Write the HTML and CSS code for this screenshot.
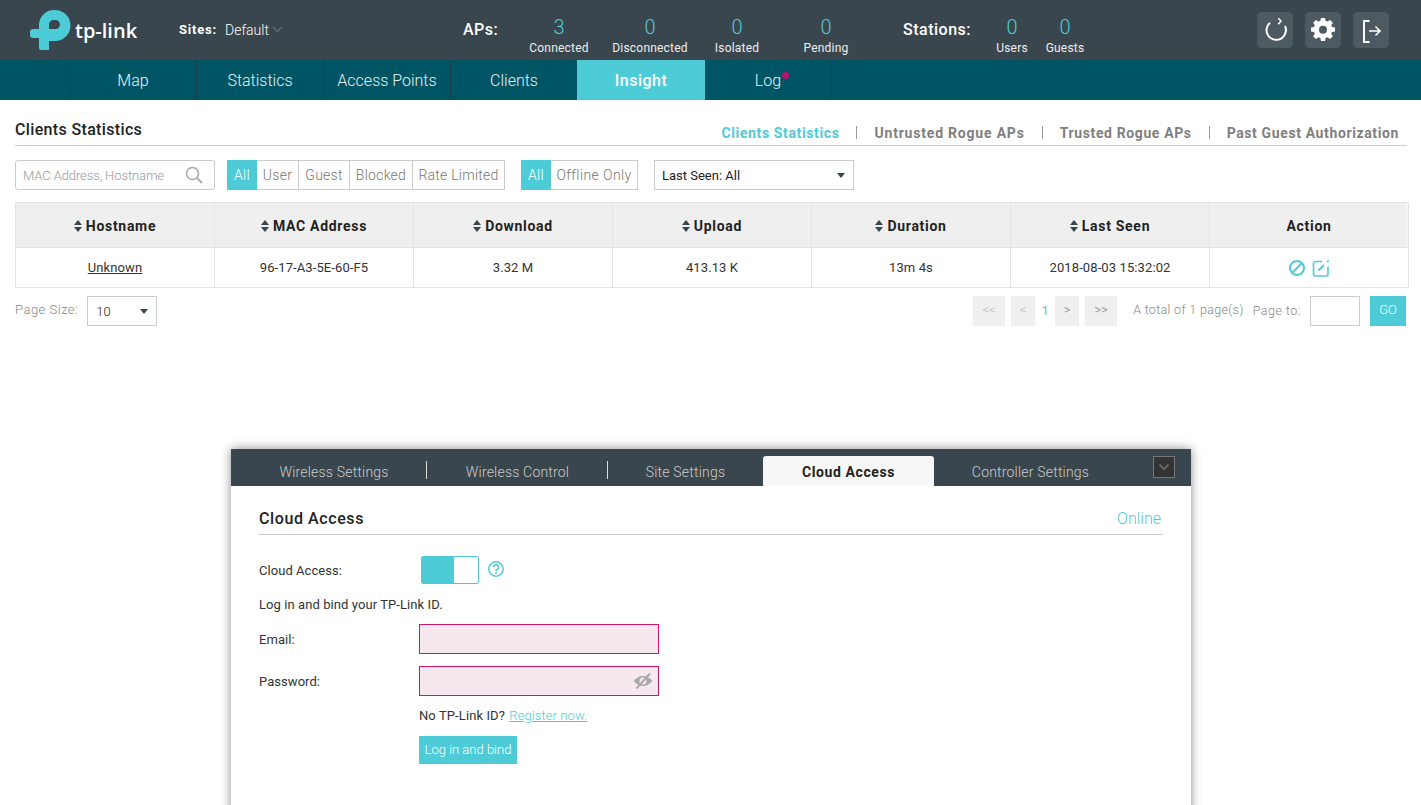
FILE: index.html
```html
<!DOCTYPE html>
<html lang="en">
<head>
<meta charset="utf-8">
<title>Clients Statistics</title>
<link rel="stylesheet" href="styles.css">
</head>
<body>
<header class="topbar">
  <div class="logo">
    <svg class="logo-mark" width="42" height="42" viewBox="0 0 42 42"><path fill-rule="evenodd" d="M1 23a3 3 0 0 1 3-3H10V16A15 15 0 0 1 25 1H26A15.500 15.500 0 0 1 26 32H20V41H12A2 2 0 0 1 10 39V29H4A3 3 0 0 1 1 26ZM20 20H26.500A4.500 4.500 0 0 0 26.500 11H24.500A4.500 4.500 0 0 0 20 15.500Z" fill="#4dcbd7"/></svg>
    <span class="logo-text">tp-link</span>
  </div>
  <div class="sites"><b>Sites:</b><span>Default</span><svg width="11" height="7" viewBox="0 0 11 7"><path d="M1 1l4.500 4.500L10 1" fill="none" stroke="#5f6b72" stroke-width="1.500"/></svg></div>
  <div class="stat-group aps">
    <b class="stat-label">APs:</b>
    <div class="stat s-conn"><span class="num">3</span><span class="cap">Connected</span></div>
    <div class="stat s-disc"><span class="num">0</span><span class="cap">Disconnected</span></div>
    <div class="stat s-iso"><span class="num">0</span><span class="cap">Isolated</span></div>
    <div class="stat s-pend"><span class="num">0</span><span class="cap">Pending</span></div>
  </div>
  <div class="stat-group stations">
    <b class="stat-label">Stations:</b>
    <div class="stat s-user"><span class="num">0</span><span class="cap">Users</span></div>
    <div class="stat s-guest"><span class="num">0</span><span class="cap">Guests</span></div>
  </div>
  <div class="tools">
    <div class="tool"><svg width="24" height="26" viewBox="0 0 24 26"><path d="M7 5.700A9.700 9.700 0 1 0 22 9" fill="none" stroke="#fff" stroke-width="2"/><path d="M15.300 1.300L18 4L15.300 7.300" fill="none" stroke="#fff" stroke-width="1.500"/></svg></div>
    <div class="tool"><svg width="24" height="24" viewBox="0 0 24 24"><path d="M10 1.500h4l.6 3 1.900.8 2.600-1.700 2.800 2.800-1.700 2.600.8 1.900 3 .6v4l-3 .6-.8 1.900 1.700 2.600-2.800 2.800-2.600-1.700-1.900.8-.6 3h-4l-.6-3-1.900-.8-2.600 1.700-2.800-2.800 1.700-2.600-.8-1.900-3-.6v-4l3-.6.800-1.900-1.700-2.600 2.800-2.800 2.600 1.700 1.900-.8Z" transform="translate(0 -1.500) scale(1 .96)" fill="#fff"/><circle cx="12" cy="11.800" r="4" fill="#4e5a61"/></svg></div>
    <div class="tool"><svg width="24" height="26" viewBox="0 0 24 26"><path d="M10.500 4H5V25H10.500" fill="none" stroke="#fff" stroke-width="2"/><path d="M10 14H21M16.500 9.500L21 14L16.500 18.500" fill="none" stroke="#fff" stroke-width="1.600"/></svg></div>
  </div>
</header>
<nav class="mainnav">
  <a class="nav-item">Map</a>
  <a class="nav-item">Statistics</a>
  <a class="nav-item">Access Points</a>
  <a class="nav-item">Clients</a>
  <a class="nav-item active">Insight</a>
  <a class="nav-item"><span class="log">Log<i class="dot"></i></span></a>
</nav>
<main class="content">
  <div class="title-row">
    <h1>Clients Statistics</h1>
    <div class="subtabs">
      <a class="subtab on">Clients Statistics</a>
      <a class="subtab wide">Untrusted Rogue APs</a>
      <a class="subtab">Trusted Rogue APs</a>
      <a class="subtab">Past Guest Authorization</a>
    </div>
  </div>
  <div class="filters">
    <div class="search"><span>MAC Address, Hostname</span><svg width="18" height="18" viewBox="0 0 18 18"><circle cx="7.500" cy="7.500" r="6" fill="none" stroke="#aaa" stroke-width="1.600"/><path d="M12 12l5 5" stroke="#aaa" stroke-width="2"/></svg></div>
    <div class="seg seg-a"><span class="on">All</span><span>User</span><span>Guest</span><span>Blocked</span><span>Rate Limited</span></div>
    <div class="seg seg-b"><span class="on">All</span><span>Offline Only</span></div>
    <div class="select seen"><span>Last Seen: All</span><i class="caret"></i></div>
  </div>
  <table class="grid">
    <thead>
      <tr>
        <th><i class="sort"></i>Hostname</th>
        <th><i class="sort"></i>MAC Address</th>
        <th><i class="sort"></i>Download</th>
        <th><i class="sort"></i>Upload</th>
        <th><i class="sort"></i>Duration</th>
        <th><i class="sort"></i>Last Seen</th>
        <th>Action</th>
      </tr>
    </thead>
    <tbody>
      <tr>
        <td><u>Unknown</u></td>
        <td>96-17-A3-5E-60-F5</td>
        <td>3.32 M</td>
        <td>413.13 K</td>
        <td>13m 4s</td>
        <td>2018-08-03 15:32:02</td>
        <td class="actions">
          <svg width="18" height="18" viewBox="0 0 18 18"><circle cx="9" cy="9" r="7" fill="none" stroke="#4dcbd7" stroke-width="2"/><path d="M4.500 13.500l9-9" stroke="#4dcbd7" stroke-width="2"/></svg>
          <svg width="18" height="18" viewBox="0 0 18 18"><path d="M10 2.500H3.500a2 2 0 0 0-2 2V15a2 2 0 0 0 2 2H14a2 2 0 0 0 2-2V7.500" fill="none" stroke="#4dcbd7" stroke-width="1.600"/><path d="M6.500 11.500L12 6" stroke="#4dcbd7" stroke-width="2"/><path d="M15 3l1.800-1.800" stroke="#4dcbd7" stroke-width="1.600"/></svg>
        </td>
      </tr>
    </tbody>
  </table>
  <div class="pager-row">
    <span class="muted ps-label">Page Size:</span>
    <div class="select size"><span>10</span><i class="caret"></i></div>
    <div class="pager">
      <span class="pg dim w32">&lt;&lt;</span>
      <span class="pg dim w24">&lt;</span>
      <span class="pg-cur">1</span>
      <span class="pg w24">&gt;</span>
      <span class="pg w32">&gt;&gt;</span>
      <span class="muted total">A total of 1 page(s)</span>
      <span class="muted pto">Page to:</span>
      <span class="pg-input"></span>
      <span class="go">GO</span>
    </div>
  </div>
</main>
<section class="panel">
  <div class="panel-tabs">
    <a class="ptab p1">Wireless Settings</a>
    <a class="ptab p2">Wireless Control</a>
    <a class="ptab p3">Site Settings</a>
    <a class="ptab p4 on">Cloud Access</a>
    <a class="ptab p5">Controller Settings</a>
    <span class="collapse"><svg width="12" height="8" viewBox="0 0 12 8"><path d="M1.500 1.500L6 6l4.500-4.500" fill="none" stroke="#666" stroke-width="2"/></svg></span>
  </div>
  <div class="panel-body">
    <div class="panel-title"><h2>Cloud Access</h2><span class="online">Online</span></div>
    <div class="row r-toggle">
      <label>Cloud Access:</label>
      <div class="toggle"><i class="t-on"></i></div>
      <svg class="help" width="18" height="18" viewBox="0 0 18 18"><circle cx="9" cy="9" r="7.200" fill="none" stroke="#4dcbd7" stroke-width="1.500"/><path d="M6.500 7.200A2.500 2.500 0 1 1 10 9.500c-.8.400-1 .8-1 1.800" fill="none" stroke="#4dcbd7" stroke-width="1.500"/><circle cx="9" cy="13.200" r="1" fill="#4dcbd7"/></svg>
    </div>
    <p class="bind">Log in and bind your TP-Link ID.</p>
    <div class="row r-field"><label>Email:</label><div class="field"></div></div>
    <div class="row r-field r-pass"><label>Password:</label><div class="field"><svg width="20" height="16" viewBox="0 0 20 16"><path d="M.5 8C3.500 4.500 6.500 3 10 3s6.500 1.500 9.500 5c-3 3.500-6 5-9.500 5S3.500 11.500.5 8Z" fill="#aaa"/><circle cx="10" cy="8" r="3.500" fill="#f7e8ef"/><path d="M3.500 15.500L17 .5" stroke="#aaa" stroke-width="2"/></svg></div></div>
    <p class="reg">No TP-Link ID? <a>Register now.</a></p>
    <span class="bind-btn">Log in and bind</span>
  </div>
</section>
</body>
</html>
```
FILE: styles.css
```css
* { box-sizing: border-box; }
html, body { margin: 0; height: 805px; overflow: hidden; }
body { font-family: Roboto, "Liberation Sans", sans-serif; font-size: 13px; color: #222; background: #fff; position: relative; }
h1, h2, p { margin: 0; }

.topbar { height: 60px; background: #3a464d; display: flex; color: #fff; }
.logo { width: 179px; padding: 9px 0 0 29px; display: flex; flex: none; }
.logo-mark { flex: none; }
.logo-text { font-family: "Open Sans", sans-serif; font-size: 20px; font-weight: 600; margin: 7px 0 0 4px; line-height: 30px; height: 30px; }
.sites { width: 284px; flex: none; display: flex; align-items: center; height: 60px; padding-bottom: 1px; font-size: 14px; }
.sites b { letter-spacing: .8px; margin-right: 8px; font-size: 13px; font-weight: 700; }
.sites span { margin-right: 3px; font-weight: 300; }
.stat-group { display: flex; flex: none; }
.stat-label { font-size: 16px; font-weight: 500; line-height: 60px; letter-spacing: .5px; }
.stat { display: flex; flex-direction: column; align-items: center; flex: none; }
.num { color: #4dcbd7; font-size: 20px; font-weight: 300; line-height: 24px; margin-top: 15px; }
.cap { font-size: 12px; font-weight: 400; line-height: 14px; margin-top: 2px; color: #eee; letter-spacing: .2px; white-space: nowrap; }
.aps { width: 440px; }
.aps .stat-label { width: 46px; }
.s-conn { width: 80px; margin-left: 10px; }
.s-disc { width: 90px; margin-left: 6px; }
.s-iso { width: 88px; margin-left: -2px; }
.s-pend { width: 90px; }
.stations { width: 354px; }
.stations .stat-label { width: 90px; }
.s-user { width: 34px; margin-left: 2px; }
.s-guest { width: 44px; margin-left: 14px; }
.tools { display: flex; gap: 12px; padding-top: 12px; }
.tool { width: 36px; height: 36px; background: #4e5a61; border-radius: 5px; display: flex; align-items: center; justify-content: center; }

.mainnav { height: 40px; background: #005565; display: flex; padding-left: 69px; }
.nav-item { width: 127px; border-left: 1px solid #17404c; color: #e8f2f3; font-size: 16px; font-weight: 300; display: flex; align-items: center; justify-content: center; }
.nav-item:last-child { border-right: 1px solid #17404c; }
.nav-item.active { background: #4dcbd7; color: #fff; font-weight: 500; border-left: 0; width: 128px; letter-spacing: .5px; }
.active + .nav-item { border-left: 0; width: 127px; }
.log { position: relative; }
.dot { position: absolute; left: 27px; top: 1px; width: 7px; height: 7px; border-radius: 50%; background: #b5166b; }

.content { padding: 0 12px 0 15px; }
.title-row { height: 46px; margin-right: 2px; border-bottom: 1px solid #ccc; display: flex; justify-content: space-between; }
h1 { font-size: 16px; font-weight: 500; line-height: 20px; padding-top: 20px; color: #222; letter-spacing: .35px; }
.subtabs { display: flex; padding-top: 26px; padding-right: 8px; height: 46px; }
.subtab { font-size: 14px; font-weight: 700; color: #7f7f7f; letter-spacing: .62px; padding: 0 17px; border-right: 1px solid #999; height: 13px; line-height: 15px; white-space: nowrap; }
.subtab.wide { letter-spacing: .8px; }
.subtab:last-child { border: 0; padding-right: 0; }
.subtab.on { color: #4dcbd7; }

.filters { display: flex; margin-top: 14px; height: 30px; }
.search { width: 200px; height: 30px; border: 1px solid #ccc; border-radius: 3px; display: flex; justify-content: space-between; align-items: center; padding: 0 11px 0 7px; color: #999; font-size: 13px; font-weight: 300; margin-right: 12px; letter-spacing: -.1px; white-space: nowrap; }
.seg { display: flex; border: 1px solid #ccc; border-left: 0; font-size: 14px; font-weight: 300; color: #777; height: 30px; letter-spacing: .25px; white-space: nowrap; }
.seg span { text-align: center; line-height: 28px; border-left: 1px solid #ccc; }
.seg .on { background: #4dcbd7; color: #fff; border: 0; margin: -1px 0; line-height: 30px; width: 30px; }
.seg-a span:nth-child(2) { width: 41px; border-left: 0; }
.seg-a span:nth-child(3) { width: 51px; }
.seg-a span:nth-child(4) { width: 63px; }
.seg-a span:nth-child(5) { width: 92px; }
.seg-a { margin-right: 16px; width: 278px; }
.seg-b { margin-right: 16px; width: 117px; letter-spacing: .4px; }
.seg-b span:last-child { border-left: 0; flex: 1; }
.select { border: 1px solid #ccc; height: 30px; display: flex; align-items: center; justify-content: space-between; background: #fff; color: #222; font-size: 13px; font-weight: 400; }
.seen { width: 200px; padding: 0 8px 0 7px; }
.caret { width: 0; height: 0; border: 4.500px solid transparent; border-top: 5px solid #37474f; border-bottom: 0; }

.grid { width: 1394px; table-layout: fixed; border-collapse: collapse; margin-top: 12px; }
.grid th, .grid td { border: 1px solid #e4e4e4; text-align: center; }
.grid th { background: #efefef; height: 45px; padding-top: 2px; font-size: 14px; font-weight: 700; color: #222; letter-spacing: .7px; }
.grid th:last-child { background: linear-gradient(90deg, #efefef 196px, #f6f6f6 196px); }
.grid td { height: 40px; font-size: 13px; font-weight: 400; color: #333; letter-spacing: .1px; }
.sort { display: inline-block; width: 8px; height: 12px; margin-right: 4px; vertical-align: -1px; position: relative; }
.sort::before, .sort::after { content: ""; position: absolute; left: 0; border: 4px solid transparent; }
.sort::before { border-bottom: 5px solid #37474f; border-top: 0; top: 0; }
.sort::after { bottom: 0; border-top: 5px solid #37474f; border-bottom: 0; }
.actions svg { margin: 0 1.500px; vertical-align: middle; }

.pager-row { display: flex; margin-top: 8px; height: 30px; }
.muted { color: #888; font-weight: 300; letter-spacing: .5px; }
.ps-label { line-height: 28px; margin-right: 9px; }
.size { width: 70px; padding: 0 8px; font-weight: 300; }
.pager { margin-left: auto; margin-right: 3px; display: flex; align-items: flex-start; }
.pg { background: #efefef; height: 30px; line-height: 28px; text-align: center; color: #888; font-size: 13px; font-weight: 300; }
.pg.dim { color: #bbb; }
.w32 { width: 32px; margin-right: 6px; }
.w24 { width: 24px; }
.pg-cur { width: 20px; text-align: center; color: #4dcbd7; line-height: 30px; font-weight: 400; }
.pager .w24:nth-child(4) { margin-right: 6px; }
.total { margin-left: 10px; margin-right: 9px; line-height: 28px; font-size: 12.500px; white-space: nowrap; letter-spacing: .33px; }
.pto { line-height: 30px; margin-right: 9px; font-size: 12.500px; white-space: nowrap; }
.pg-input { width: 50px; height: 30px; border: 1px solid #ccc; margin-right: 10px; }
.go { width: 36px; height: 30px; background: #4dcbd7; color: #fff; text-align: center; line-height: 28px; font-weight: 300; font-size: 13px; }

.panel { position: absolute; left: 231px; top: 449px; width: 960px; height: 400px; background: #fff; box-shadow: 0 0 10px rgba(0,0,0,.45); }
.panel-tabs { height: 37px; background: #3a464d; position: relative; display: flex; align-items: flex-end; }
.ptab { color: #ccc; font-size: 14px; font-weight: 300; height: 30px; line-height: 32px; text-align: center; letter-spacing: .2px; position: relative; flex: none; }
.p1 { width: 196px; padding-left: 10px; }
.p2 { width: 181px; }
.p3 { width: 155px; }
.p4 { width: 171px; }
.p5 { width: 193px; }
.p1::after, .p2::after { content: ""; position: absolute; right: 0; top: 5px; height: 18px; border-right: 1px solid #ddd; }
.ptab.on { background: #f7f7f7; color: #222; font-weight: 700; border-radius: 3px 3px 0 0; letter-spacing: .6px; font-size: 14px; }
.collapse { position: absolute; right: 16px; top: 7px; width: 22px; height: 22px; border: 1px solid #777; background: #333; display: flex; align-items: center; justify-content: center; }

.panel-body { padding: 0 28px; }
.panel-title { height: 49px; display: flex; justify-content: space-between; border-bottom: 1px solid #ccc; }
h2 { font-size: 16px; font-weight: 500; padding-top: 23px; line-height: 20px; letter-spacing: .6px; }
.online { color: #4dcbd7; font-size: 16px; font-weight: 300; padding: 23px 2px 0 0; line-height: 20px; }
.row { display: flex; align-items: center; }
.row label { width: 160px; font-size: 13px; font-weight: 400; letter-spacing: .05px; flex: none; color: #333; }
.r-toggle { margin-top: 21px; height: 28px; }
.r-toggle label { width: 162px; }
.toggle { width: 58px; height: 28px; border: 1px solid #4dcbd7; border-radius: 2px; background: #fff; margin-right: 8px; }
.t-on { display: block; width: 32px; height: 26px; background: #4dcbd7; }
.help { margin-bottom: 2px; }
.bind { margin-top: 13px; line-height: 16px; letter-spacing: .08px; font-size: 13px; color: #333; }
.r-field { height: 30px; margin-top: 12px; }
.bind + .r-field { margin-top: 11px; }
.field { width: 240px; height: 30px; border: 1px solid #c9186b; background: #f7e8ef; display: flex; align-items: center; justify-content: flex-end; padding-right: 5px; }
.reg { margin: 12px 0 0 160px; line-height: 16px; font-size: 13px; letter-spacing: .1px; color: #333; }
.reg a { color: #4dcbd7; text-decoration: underline; font-weight: 300; margin-left: 1px; }
.bind-btn { display: block; margin: 12px 0 0 160px; width: 98px; height: 28px; background: #4dcbd7; color: #fff; line-height: 28px; text-align: center; font-size: 13px; font-weight: 300; }
```
